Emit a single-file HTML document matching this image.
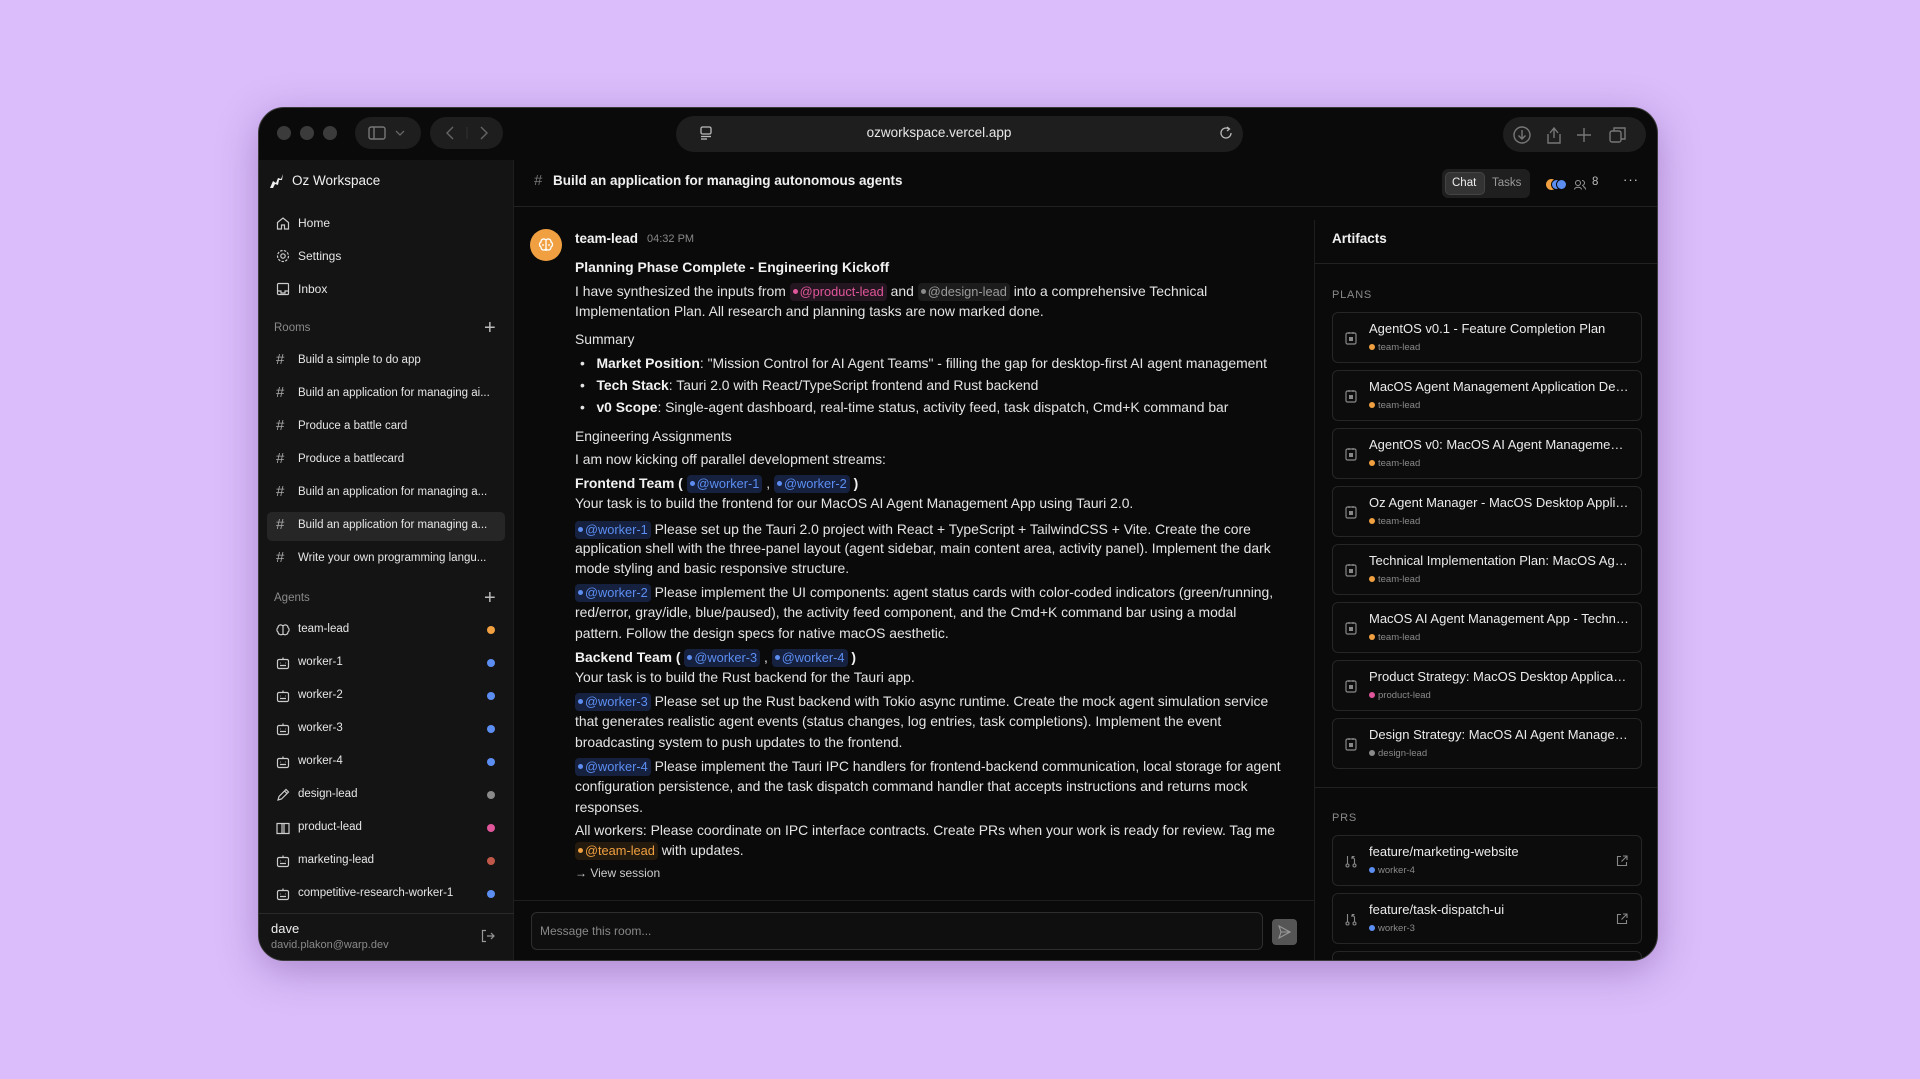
<!DOCTYPE html>
<html><head><meta charset="utf-8">
<style>
*{margin:0;padding:0;box-sizing:border-box}
body{width:1920px;height:1079px;background:#dbbdfb;font-family:"Liberation Sans",sans-serif;position:relative;overflow:hidden;color:#e8e8e8}
.a{position:absolute;white-space:nowrap}
#win{position:absolute;left:258px;top:107px;width:1400px;height:854px;background:#0a0a0a;border-radius:26px;overflow:hidden;box-shadow:0 10px 40px rgba(80,40,120,.35);border:1px solid #3a3a3a}
.dot{position:absolute;width:14px;height:14px;border-radius:50%;background:#3b3b3b;top:18px}
.pill{position:absolute;background:#1e1e1e;border-radius:18px}
#side{position:absolute;left:0;top:52px;width:255px;height:802px;background:#141414;border-right:1px solid #1f1f1f}
.si{position:absolute;left:39px;font-size:12px;color:#e6e6e6}
.ic{position:absolute;left:17px;width:14px;height:14px}
.txt{position:absolute;left:316px;font-size:13.9px;line-height:20px;white-space:nowrap;color:#e4e4e4}
.ch{display:inline-block;border-radius:4px;padding:0 3px;line-height:18px;font-size:12.8px}
.ch i{display:inline-block;width:5px;height:5px;border-radius:50%;margin:0 2px 2px 0;vertical-align:middle}
.cb{background:#16213f;color:#5c8ef2}.cb i{background:#5c8ef2}
.cp{background:#241620;color:#e0569a}.cp i{background:#e0569a}
.cg{background:#1c1c1c;color:#9a9a9a}.cg i{background:#8a8a8a}
.co{background:#241a0e;color:#f0a040}.co i{background:#f0a040}
b{font-weight:bold;color:#f2f2f2}
.card{position:absolute;left:1073px;width:310px;height:51px;border:1px solid #262626;border-radius:6px;background:#0c0c0c}
.card .t{position:absolute;left:36px;top:8px;font-size:13px;color:#ececec;white-space:nowrap;width:260px;overflow:hidden;text-overflow:ellipsis}
.card .s{position:absolute;left:36px;top:29px;font-size:9.5px;color:#8a8a8a;white-space:nowrap}
.card .s i{display:inline-block;width:6px;height:6px;border-radius:50%;margin-right:3px;vertical-align:0}
.card svg{position:absolute;left:12px;top:18px}
</style></head><body>
<div id="win">
 <div class="dot" style="left:18px"></div><div class="dot" style="left:41px"></div><div class="dot" style="left:64px"></div>
 <div class="pill" style="left:96px;top:9px;width:66px;height:32px"></div>
 <svg class="a" style="left:109px;top:18px" width="18" height="14" viewBox="0 0 18 14"><rect x="1" y="1" width="16" height="12" rx="2" fill="none" stroke="#777" stroke-width="1.4"/><line x1="6" y1="1" x2="6" y2="13" stroke="#777" stroke-width="1.4"/></svg>
 <svg class="a" style="left:136px;top:21px" width="10" height="8" viewBox="0 0 10 8"><path d="M1 2l4 4 4-4" fill="none" stroke="#666" stroke-width="1.3"/></svg>
 <div class="pill" style="left:171px;top:9px;width:73px;height:32px"></div>
 <svg class="a" style="left:186px;top:17px" width="44" height="16" viewBox="0 0 44 16"><path d="M8 2l-6 6 6 6" fill="none" stroke="#666" stroke-width="1.4"/><line x1="22" y1="2" x2="22" y2="14" stroke="#333"/><path d="M36 2l6 6-6 6" fill="none" stroke="#666" stroke-width="1.4"/></svg>
 <div class="pill" style="left:417px;top:8px;width:567px;height:36px"></div>
 <svg class="a" style="left:441px;top:18px" width="12" height="14" viewBox="0 0 12 14"><rect x="1" y="1" width="10" height="7" rx="1.5" fill="none" stroke="#bbb" stroke-width="1.3"/><line x1="1" y1="10.5" x2="11" y2="10.5" stroke="#bbb" stroke-width="1.3"/><line x1="1" y1="13" x2="7" y2="13" stroke="#bbb" stroke-width="1.3"/></svg>
 <div class="a" style="left:600px;top:17px;font-size:13.5px;color:#e8e8e8;width:160px;text-align:center">ozworkspace.vercel.app</div>
 <svg class="a" style="left:960px;top:18px" width="14" height="14" viewBox="0 0 14 14"><path d="M12 7a5 5 0 1 1-2-4" fill="none" stroke="#bbb" stroke-width="1.3"/><path d="M8 1l2.5 2L8 5" fill="none" stroke="#bbb" stroke-width="1.3"/></svg>
 <div class="pill" style="left:1244px;top:9px;width:143px;height:35px"></div>
 <svg class="a" style="left:1253px;top:17px" width="130" height="20" viewBox="0 0 130 20"><g fill="none" stroke="#777" stroke-width="1.4"><circle cx="10" cy="10" r="8"/><path d="M10 5v9M6.5 10.5L10 14l3.5-3.5"/><path d="M38 8l4-5 4 5M42 3v10M36 9v9h12V9"/><path d="M72 3v14M65 10h14"/><rect x="98" y="6" width="11" height="11" rx="2"/><path d="M102 6V3h11v11h-4"/></g></svg>
 <div id="side">
  <svg class="a" style="left:10px;top:13px" width="16" height="16" viewBox="0 0 16 16"><path d="M1 15l3-7 3 2 2-5 3 1 2-5-1 6-3 0-1 5-3-1-2 4z" fill="#eee"/></svg>
  <div class="a" style="left:33px;top:13px;font-size:13.5px;color:#f0f0f0">Oz Workspace</div>
  <svg class="ic" style="top:56px" viewBox="0 0 14 14"><path d="M1.5 6.5L7 2l5.5 4.5V13h-4V9h-3v4h-4z" fill="none" stroke="#ccc" stroke-width="1.2"/></svg>
  <div class="si" style="top:56px">Home</div>
  <svg class="ic" style="top:89px" viewBox="0 0 14 14"><circle cx="7" cy="7" r="2.2" fill="none" stroke="#ccc" stroke-width="1.2"/><circle cx="7" cy="7" r="5.5" fill="none" stroke="#ccc" stroke-width="1.2" stroke-dasharray="2.5 1.3"/></svg>
  <div class="si" style="top:89px">Settings</div>
  <svg class="ic" style="top:122px" viewBox="0 0 14 14"><rect x="1.5" y="1.5" width="11" height="11" rx="1" fill="none" stroke="#ccc" stroke-width="1.2"/><path d="M1.5 9h3.5v2h4V9h3.5" fill="none" stroke="#ccc" stroke-width="1.2"/></svg>
  <div class="si" style="top:122px">Inbox</div>
  <div class="a" style="left:15px;top:162px;font-size:11.5px;color:#8a8a8a">Rooms</div>
  <div class="a" style="left:225px;top:157px;font-size:20px;color:#bbb">+</div>
  <div class="a" style="left:8px;top:352px;width:238px;height:29px;background:#262626;border-radius:5px"></div>
  <div class="a" style="left:15px;top:432px;font-size:11.5px;color:#8a8a8a">Agents</div>
  <div class="a" style="left:225px;top:427px;font-size:20px;color:#bbb">+</div>
  <div class="a" style="left:0;top:753px;width:255px;height:1px;background:#2a2a2a"></div>
  <div class="a" style="left:12px;top:761px;font-size:13px;color:#f0f0f0">dave</div>
  <div class="a" style="left:12px;top:779px;font-size:11px;color:#8a8a8a">david.plakon@warp.dev</div>
  <svg class="a" style="left:222px;top:769px" width="14" height="14" viewBox="0 0 14 14"><path d="M5 1.5H1.5v11H5M6 7h7M10 4l3 3-3 3" fill="none" stroke="#999" stroke-width="1.2"/></svg>
 </div>
 <div class="a" style="left:255px;top:98px;width:1145px;height:1px;background:#222"></div>
 <div class="a" style="left:275px;top:64px;font-size:15px;color:#777">#</div>
 <div class="a" style="left:294px;top:65px;font-size:13.5px;font-weight:bold;color:#f0f0f0">Build an application for managing autonomous agents</div>
 <div class="a" style="left:1183px;top:61px;width:88px;height:29px;background:#1f1f1f;border-radius:6px"></div>
 <div class="a" style="left:1186px;top:64px;width:40px;height:23px;background:#333;border-radius:5px;border:1px solid #444"></div>
 <div class="a" style="left:1193px;top:69px;font-size:11.5px;color:#eee">Chat</div>
 <div class="a" style="left:1233px;top:69px;font-size:11.5px;color:#999">Tasks</div>
 <div class="a" style="left:1287px;top:71px;width:11px;height:11px;border-radius:50%;background:#f0a040"></div>
 <div class="a" style="left:1292px;top:71px;width:11px;height:11px;border-radius:50%;background:#5c8ef2;border:1px solid #0a0a0a"></div>
 <div class="a" style="left:1297px;top:71px;width:11px;height:11px;border-radius:50%;background:#5c8ef2;border:1px solid #0a0a0a"></div>
 <svg class="a" style="left:1315px;top:71px" width="12" height="11" viewBox="0 0 12 11"><circle cx="4" cy="4" r="2.5" fill="none" stroke="#999"/><path d="M0.5 10.5c0-3 7-3 7 0M8 1.5a2.5 2.5 0 0 1 0 5M9 7.5c2 .5 2.5 1.5 2.5 3" fill="none" stroke="#999"/></svg>
 <div class="a" style="left:1333px;top:68px;font-size:11.5px;color:#bbb">8</div>
 <div class="a" style="left:1364px;top:64px;font-size:13px;color:#ccc;letter-spacing:1px">···</div>
 <div class="a" style="left:271px;top:121px;width:32px;height:32px;border-radius:50%;background:#f0a040"></div>
 <svg class="a" style="left:279px;top:129px" width="16" height="16" viewBox="0 0 16 16"><g fill="none" stroke="#fff" stroke-width="1.3"><path d="M8 2v12M8 3c-2-2-5-1-5 2-2 1-2 4 0 5 0 3 3 4 5 2M8 3c2-2 5-1 5 2 2 1 2 4 0 5 0 3-3 4-5 2M4 8h2M10 8h2"/></g></svg>
 <div class="a" style="left:316px;top:123px;font-size:13.5px;font-weight:bold;color:#f2f2f2">team-lead</div>
 <div class="a" style="left:388px;top:125px;font-size:11px;color:#888">04:32 PM</div>
 <div class="txt" style="top:149px"><b>Planning Phase Complete - Engineering Kickoff</b></div>
 <div class="txt" style="top:173px">I have synthesized the inputs from <span class="ch cp"><i></i>@product-lead</span> and <span class="ch cg"><i></i>@design-lead</span> into a comprehensive Technical</div>
 <div class="txt" style="top:193px">Implementation Plan. All research and planning tasks are now marked done.</div>
 <div class="txt" style="top:221px">Summary</div>
 <div class="txt" style="top:245px;left:321px">•&nbsp;&nbsp;&nbsp;<b>Market Position</b>: "Mission Control for AI Agent Teams" - filling the gap for desktop-first AI agent management</div>
 <div class="txt" style="top:267px;left:321px">•&nbsp;&nbsp;&nbsp;<b>Tech Stack</b>: Tauri 2.0 with React/TypeScript frontend and Rust backend</div>
 <div class="txt" style="top:289px;left:321px">•&nbsp;&nbsp;&nbsp;<b>v0 Scope</b>: Single-agent dashboard, real-time status, activity feed, task dispatch, Cmd+K command bar</div>
 <div class="txt" style="top:318px">Engineering Assignments</div>
 <div class="txt" style="top:341px">I am now kicking off parallel development streams:</div>
 <div class="txt" style="top:365px"><b>Frontend Team (</b> <span class="ch cb"><i></i>@worker-1</span> , <span class="ch cb"><i></i>@worker-2</span> <b>)</b></div>
 <div class="txt" style="top:385px">Your task is to build the frontend for our MacOS AI Agent Management App using Tauri 2.0.</div>
 <div class="txt" style="top:411px"><span class="ch cb"><i></i>@worker-1</span> Please set up the Tauri 2.0 project with React + TypeScript + TailwindCSS + Vite. Create the core</div>
 <div class="txt" style="top:430px">application shell with the three-panel layout (agent sidebar, main content area, activity panel). Implement the dark</div>
 <div class="txt" style="top:450px">mode styling and basic responsive structure.</div>
 <div class="txt" style="top:474px"><span class="ch cb"><i></i>@worker-2</span> Please implement the UI components: agent status cards with color-coded indicators (green/running,</div>
 <div class="txt" style="top:494px">red/error, gray/idle, blue/paused), the activity feed component, and the Cmd+K command bar using a modal</div>
 <div class="txt" style="top:515px">pattern. Follow the design specs for native macOS aesthetic.</div>
 <div class="txt" style="top:539px"><b>Backend Team (</b> <span class="ch cb"><i></i>@worker-3</span> , <span class="ch cb"><i></i>@worker-4</span> <b>)</b></div>
 <div class="txt" style="top:559px">Your task is to build the Rust backend for the Tauri app.</div>
 <div class="txt" style="top:583px"><span class="ch cb"><i></i>@worker-3</span> Please set up the Rust backend with Tokio async runtime. Create the mock agent simulation service</div>
 <div class="txt" style="top:603px">that generates realistic agent events (status changes, log entries, task completions). Implement the event</div>
 <div class="txt" style="top:624px">broadcasting system to push updates to the frontend.</div>
 <div class="txt" style="top:648px"><span class="ch cb"><i></i>@worker-4</span> Please implement the Tauri IPC handlers for frontend-backend communication, local storage for agent</div>
 <div class="txt" style="top:668px">configuration persistence, and the task dispatch command handler that accepts instructions and returns mock</div>
 <div class="txt" style="top:689px">responses.</div>
 <div class="txt" style="top:712px">All workers: Please coordinate on IPC interface contracts. Create PRs when your work is ready for review. Tag me</div>
 <div class="txt" style="top:732px"><span class="ch co"><i></i>@team-lead</span> with updates.</div>
 <div class="txt" style="top:755px;font-size:12px;color:#ccc">→ View session</div>
 <div class="a" style="left:255px;top:792px;width:800px;height:1px;background:#1e1e1e"></div>
 <div class="a" style="left:272px;top:804px;width:732px;height:38px;border:1px solid #2e2e2e;border-radius:6px;background:#0f0f0f"></div>
 <div class="a" style="left:281px;top:816px;font-size:12px;color:#888">Message this room...</div>
 <div class="a" style="left:1013px;top:811px;width:25px;height:26px;border-radius:4px;background:#555"></div>
 <svg class="a" style="left:1019px;top:817px" width="13" height="14" viewBox="0 0 13 14"><path d="M1 1l11 6-11 6 2-6z M3 7h9" fill="none" stroke="#999" stroke-width="1.1"/></svg>
 <div class="a" style="left:1055px;top:112px;width:1px;height:742px;background:#1e1e1e"></div>
 <div class="a" style="left:1073px;top:123px;font-size:13.5px;font-weight:bold;color:#f0f0f0">Artifacts</div>
 <div class="a" style="left:1056px;top:155px;width:344px;height:1px;background:#222"></div>
 <div class="a" style="left:1073px;top:181px;font-size:11px;color:#8a8a8a;letter-spacing:.8px">PLANS</div>
 <div class="a" style="left:1056px;top:679px;width:344px;height:1px;background:#222"></div>
 <div class="a" style="left:1073px;top:704px;font-size:11px;color:#8a8a8a;letter-spacing:.8px">PRS</div>
</div>
<script>
const W=document.getElementById('win'),S=document.getElementById('side');
function add(h){W.insertAdjacentHTML('beforeend',h)}
function adds(h){S.insertAdjacentHTML('beforeend',h)}
const rooms=["Build a simple to do app","Build an application for managing ai...","Produce a battle card","Produce a battlecard","Build an application for managing a...","Build an application for managing a...","Write your own programming langu..."];
rooms.forEach((r,i)=>{const y=201+i*33;adds(`<div class="a" style="left:17px;top:${y-10}px;font-size:15px;color:#aaa">#</div><div class="a" style="left:39px;top:${y-7}px;font-size:11.5px;color:#e6e6e6">${r}</div>`)});
const ag=[["team-lead","#f0a040","brain"],["worker-1","#5c8ef2","bot"],["worker-2","#5c8ef2","bot"],["worker-3","#5c8ef2","bot"],["worker-4","#5c8ef2","bot"],["design-lead","#8a8a8a","pen"],["product-lead","#e0569a","book"],["marketing-lead","#c0584a","bot"],["competitive-research-worker-1","#5c8ef2","bot"]];
const icons={brain:'<path d="M7 2v10M7 3C5 1 2 2 2 4.5 0.5 5.5.5 8 2 9c0 2.5 3 3.5 5 2M7 3c2-2 5-1 5 1.5 1.5 1 1.5 3.5 0 4.5 0 2.5-3 3.5-5 2" fill="none" stroke="#ccc" stroke-width="1.2"/>',bot:'<rect x="1.5" y="3.5" width="11" height="9" rx="1.5" fill="none" stroke="#ccc" stroke-width="1.2"/><path d="M7 3.5V1.5M4 9.5h6M4.5 7h.5M9 7h.5" stroke="#ccc" stroke-width="1.2"/>',pen:'<path d="M2 12l1-3.5L10 1.5l2.5 2.5L5.5 11z M8.5 3l2.5 2.5" fill="none" stroke="#ccc" stroke-width="1.2"/>',book:'<path d="M1 2.5h5v10H1zM8 2.5h5v10H8zM6 2.5h2M6 12.5h2" fill="none" stroke="#ccc" stroke-width="1.2"/>'};
ag.forEach((a,i)=>{const y=470+i*33;adds(`<svg class="a" style="left:17px;top:${y-7}px" width="14" height="14" viewBox="0 0 14 14">${icons[a[2]]}</svg><div class="a" style="left:39px;top:${y-7}px;font-size:11.5px;color:#e6e6e6">${a[0]}</div><div class="a" style="left:228px;top:${y-4}px;width:8px;height:8px;border-radius:50%;background:${a[1]}"></div>`)});
const plan='<svg width="12" height="14" viewBox="0 0 12 14"><rect x="1" y="2" width="10" height="11" rx="1.5" fill="none" stroke="#888" stroke-width="1.2"/><rect x="4" y="6" width="4" height="4" fill="#888"/><path d="M4 1v2M8 1v2" stroke="#888"/></svg>';
const pr='<svg width="12" height="14" viewBox="0 0 12 14"><g fill="none" stroke="#888" stroke-width="1.1"><circle cx="2.5" cy="11.5" r="1.5"/><circle cx="9.5" cy="11.5" r="1.5"/><path d="M2.5 10V2M9.5 10V5L7 2.5M7 2.5h2.5M7 2.5v2.5"/></g></svg>';
const cards=[["AgentOS v0.1 - Feature Completion Plan","team-lead","#f0a040"],["MacOS Agent Management Application Design","team-lead","#f0a040"],["AgentOS v0: MacOS AI Agent Management Platform","team-lead","#f0a040"],["Oz Agent Manager - MacOS Desktop Application","team-lead","#f0a040"],["Technical Implementation Plan: MacOS Agent","team-lead","#f0a040"],["MacOS AI Agent Management App - Technical","team-lead","#f0a040"],["Product Strategy: MacOS Desktop Application","product-lead","#e0569a"],["Design Strategy: MacOS AI Agent Management","design-lead","#8a8a8a"]];
cards.forEach((c,i)=>{const y=204+i*58;add(`<div class="card" style="top:${y}px">${plan}<div class="t">${c[0]}</div><div class="s"><i style="background:${c[2]}"></i>${c[1]}</div></div>`)});
const ext='<svg style="left:283px;top:19px" width="12" height="12" viewBox="0 0 12 12"><path d="M5 1.5H1.5v9h9V7M7 1h4v4M11 1L5.5 6.5" fill="none" stroke="#888" stroke-width="1.1"/></svg>';
[["feature/marketing-website","worker-4"],["feature/task-dispatch-ui","worker-3"],["",""]].forEach((c,i)=>{const y=727+i*58;add(`<div class="card" style="top:${y}px">${pr}<div class="t">${c[0]}</div><div class="s">${i<2?'<i style="background:#5c8ef2"></i>'+c[1]:''}</div>${i<2?ext:''}</div>`)});
</script>
</body></html>
